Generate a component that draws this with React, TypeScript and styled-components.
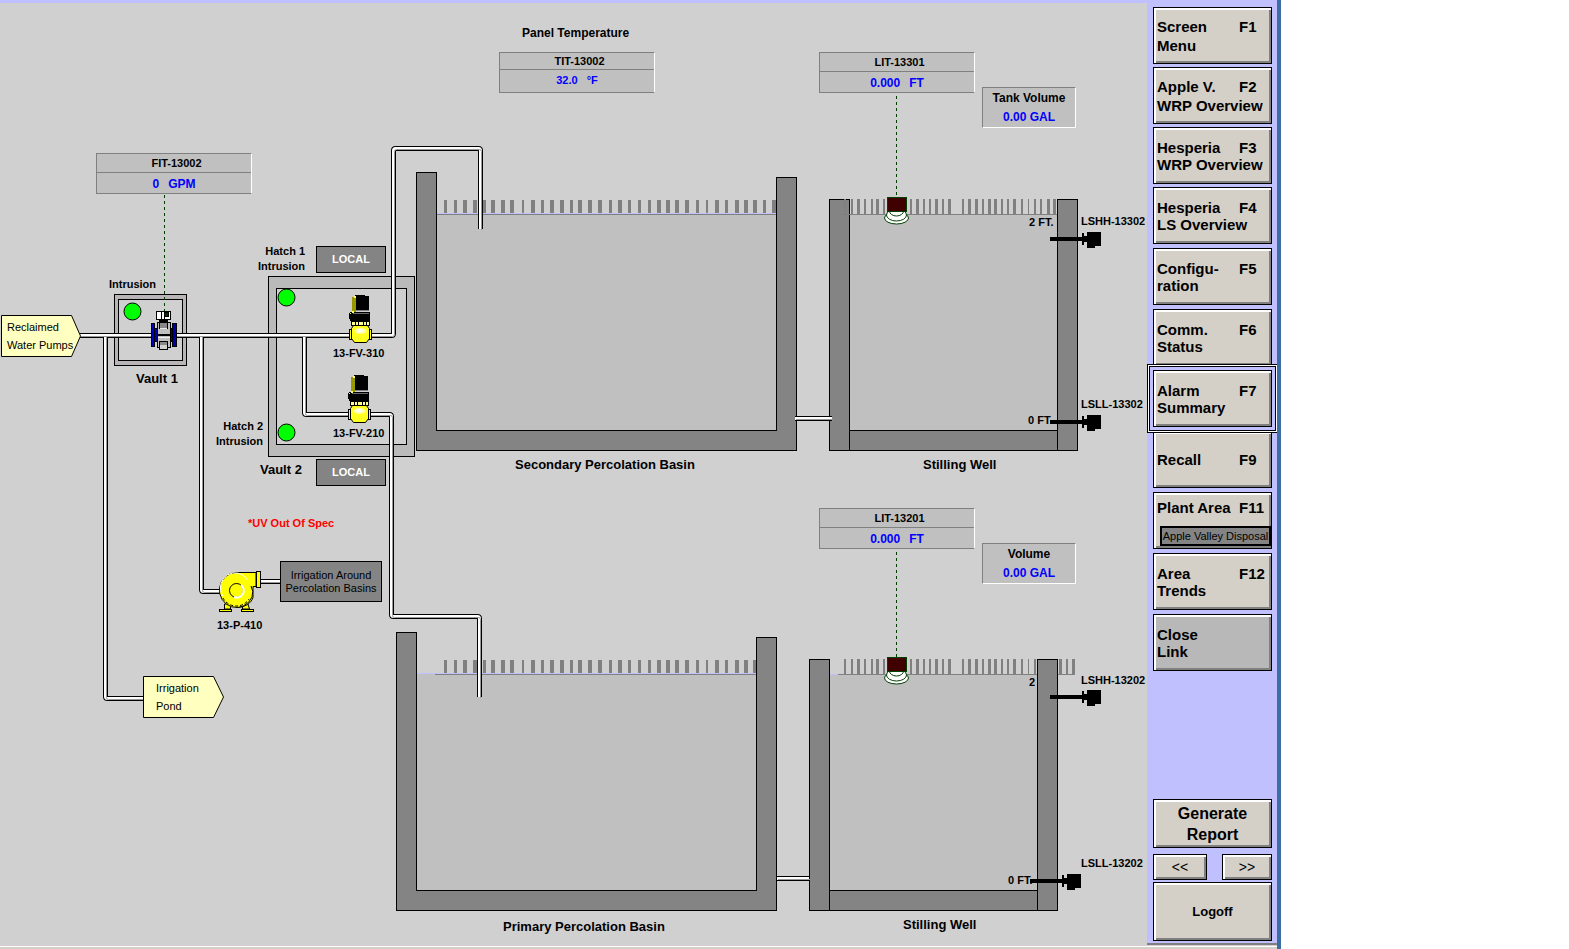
import React from "react";
import styled, { createGlobalStyle, css } from "styled-components";

const color = {
  canvas: "#d0d0d0",
  lilac: "#c0c0ff",
  water: "#c0c0c0",
  steel: "#848484",
  grey: "#808080",
  face: "#d4d0c8",
  value: "#0000ff",
  signal: "#004000",
  tag: "#ffffc0",
};

const GlobalStyle = createGlobalStyle`
  *, *::before, *::after { box-sizing: border-box; }
  body {
    margin: 0;
    background: #fff;
    color: #000;
    font: 11px/15px "Liberation Sans", Arial, sans-serif;
  }
`;

/* ---------- page frame ---------- */

const Workstation = styled.div`
  display: flex;
  flex-direction: column;
  max-width: 1281px;
  min-height: 100vh;
  border-right: 4px solid #3a6ea5;
  background: ${color.canvas};
`;

const Workspace = styled.div`
  display: flex;
  flex: 1;
`;

const StatusEdge = styled.footer`
  height: 3px;
  border-top: 1px solid #fff;
  background: ${color.face};
`;

const CanvasArea = styled.main`
  flex: 1;
  min-width: 0;
  overflow: hidden;
  background: ${color.canvas};
  box-shadow: inset 0 3px ${color.lilac};
`;

const Canvas = styled.div`
  position: relative;
  min-height: 946px;
`;

const Artwork = styled.svg`
  position: absolute;
  top: 0;
  left: 0;
  display: block;
`;

/* ---------- canvas nodes ---------- */

interface Spot {
  $x: number;
  $y: number;
}

const spot = css<Spot>`
  position: absolute;
  left: ${(p) => p.$x}px;
  top: ${(p) => p.$y}px;
`;

const Label = styled.div<Spot & { $size?: number; $align?: string; $color?: string }>`
  ${spot}
  font-size: ${(p) => p.$size ?? 11}px;
  font-weight: bold;
  line-height: 15px;
  text-align: ${(p) => p.$align ?? "left"};
  color: ${(p) => p.$color ?? "#000"};
  white-space: pre;
`;

const Meter = styled.section<Spot>`
  ${spot}
  width: 156px;
  height: 41px;
  display: flex;
  flex-direction: column;
  border: 1px solid ${color.grey};
  border-right-color: #fff;
  background: ${color.water};
  font-weight: bold;
`;

const MeterName = styled.div<{ $short?: boolean }>`
  height: ${(p) => (p.$short ? 17 : 19)}px;
  padding-left: 5px;
  border-bottom: 1px solid ${color.grey};
  line-height: ${(p) => (p.$short ? 17 : 19)}px;
  text-align: center;
`;

const MeterValue = styled.div<{ $small?: boolean }>`
  display: flex;
  justify-content: center;
  gap: 9px;
  color: ${color.value};
  font-size: ${(p) => (p.$small ? 11 : 12)}px;
  line-height: ${(p) => (p.$small ? 21 : 23)}px;
`;

const Volume = styled.section<Spot>`
  ${spot}
  width: 94px;
  height: 41px;
  display: flex;
  flex-direction: column;
  justify-content: center;
  border: 1px solid;
  border-color: ${color.grey} #fff #fff ${color.grey};
  background: ${color.water};
  font-size: 12px;
  font-weight: bold;
  line-height: 19px;
  text-align: center;
`;

const VolumeValue = styled.div`
  color: ${color.value};
`;

const ModeBox = styled.div<Spot>`
  ${spot}
  width: 70px;
  height: 27px;
  border: 1px solid #000;
  background: ${color.steel};
  color: #fff;
  font-weight: bold;
  line-height: 25px;
  text-align: center;
`;

const Destination = styled.div<Spot>`
  ${spot}
  width: 102px;
  height: 41px;
  padding-top: 7px;
  border: 1px solid #000;
  background: ${color.steel};
  line-height: 13px;
  text-align: center;
  white-space: pre;
`;

const ArrowText = styled.div<Spot>`
  ${spot}
  line-height: 18px;
  white-space: pre;
`;

/* ---------- navigation ---------- */

const Sidebar = styled.nav`
  flex: none;
  display: flex;
  flex-direction: column;
  gap: 4px;
  width: 130px;
  margin-bottom: 1px;
  padding: 7px 5px 2px 6px;
  border-bottom: 2px solid ${color.grey};
  background: ${color.lilac};
  overflow: clip;
`;

const OverviewGroup = styled.div`
  display: flex;
  flex-direction: column;
  gap: 3px;
`;

const FooterGroup = styled.div`
  display: flex;
  flex-direction: column;
  margin-top: auto;
`;

const Pager = styled.div`
  display: flex;
  justify-content: space-between;
  margin: 6px 0 2px;
`;

const Key = styled.button<{ $dim?: boolean; $focused?: boolean; $bottom?: boolean }>`
  position: relative;
  display: flex;
  flex-direction: column;
  justify-content: ${(p) => (p.$bottom ? "flex-end" : "center")};
  width: 100%;
  height: 57px;
  margin: 0;
  padding: 0 0 ${(p) => (p.$bottom ? 2 : 0)}px 3px;
  border: 1px solid #000;
  border-radius: 0;
  background: ${(p) => (p.$dim ? "#b8b8b8" : color.face)};
  box-shadow: inset 2px 2px #fff, inset -2px -2px ${color.grey};
  color: #000;
  font: bold 15px/17px "Liberation Sans", Arial, sans-serif;
  text-align: left;
  white-space: pre;
  ${(p) =>
    p.$focused &&
    css`
      z-index: 1;
      box-shadow: inset 2px 2px #fff, inset -2px -2px ${color.grey},
        0 0 0 3px ${color.lilac}, 0 0 0 4px #000, 0 0 0 5px #fff, 0 0 0 6px #000;
    `}
`;

const KeyRow = styled.span<{ $loose?: boolean }>`
  display: grid;
  grid-template-columns: 82px 1fr;
  align-items: baseline;
  line-height: ${(p) => (p.$loose ? 19 : 17)}px;
`;

const AreaName = styled.span`
  align-self: stretch;
  margin: 10px 0 0 3px;
  height: 20px;
  border: 2px solid #000;
  background: ${color.steel};
  font: 11px/16px "Liberation Sans", Arial, sans-serif;
  text-align: center;
`;

const ReportKey = styled(Key)`
  display: block;
  height: 49px;
  padding: 0;
  font-size: 16px;
  line-height: 21px;
  text-align: center;
`;

const PageKey = styled(Key)<{ $width: number }>`
  width: ${(p) => p.$width}px;
  height: 26px;
  padding: 0;
  font: 14px/16px "Liberation Sans", Arial, sans-serif;
  text-align: center;
`;

const LogoffKey = styled(Key)`
  height: 59px;
  padding: 0;
  font: bold 13px/16px "Liberation Sans", Arial, sans-serif;
  text-align: center;
`;

interface KeyDef {
  label: string;
  code: string;
  loose?: boolean;
  focused?: boolean;
  area?: string;
}

const overviewKeys: KeyDef[] = [
  { label: "Screen\nMenu", code: "F1", loose: true },
  { label: "Apple V.\nWRP Overview", code: "F2", loose: true },
  { label: "Hesperia\nWRP Overview", code: "F3" },
  { label: "Hesperia\nLS Overview", code: "F4" },
];

const systemKeys: KeyDef[] = [
  { label: "Configu-\nration", code: "F5" },
  { label: "Comm.\nStatus", code: "F6" },
  { label: "Alarm\nSummary", code: "F7", focused: true },
  { label: "Recall", code: "F9" },
  { label: "Plant Area", code: "F11", area: "Apple Valley Disposal" },
  { label: "Area\nTrends", code: "F12" },
];

const FunctionKey = ({ def }: { def: KeyDef }) => (
  <Key type="button" $focused={def.focused} $bottom={Boolean(def.area)}>
    <KeyRow $loose={def.loose}>
      <span>{def.label}</span>
      <span>{def.code}</span>
    </KeyRow>
    {def.area && <AreaName>{def.area}</AreaName>}
  </Key>
);

/* ---------- drawing ---------- */

const pipes = [
  "M80 335.5H391.5Q393.5 335.5 393.5 333.5V150.5Q393.5 148.5 395.5 148.5H478.5Q480.5 148.5 480.5 150.5V229",
  "M105.5 335.5V696.5Q105.5 698.5 107.5 698.5H144",
  "M201.5 335.5V589.5Q201.5 591.5 203.5 591.5H222",
  "M304.5 335.5V412.5Q304.5 414.5 306.5 414.5H389.5Q391.5 414.5 391.5 416.5V614.5Q391.5 616.5 393.5 616.5H477.5Q479.5 616.5 479.5 618.5V697",
  "M260 581.5H281",
  "M795 418.5H832",
  "M777 878.5H809",
];

const Pipes = () => (
  <g fill="none" shapeRendering="auto">
    {pipes.map((d) => (
      <path key={d} d={d} stroke="#000" strokeWidth="5" />
    ))}
    {pipes.map((d) => (
      <path key={d} d={d} stroke="#fff" strokeWidth="3" />
    ))}
    {pipes.map((d) => (
      <path key={d} d={d} stroke="#989898" strokeWidth="1" transform="translate(1 1)" />
    ))}
  </g>
);

type Tick = [number, number];

const basinTicks: Tick[] = [
  [444, 3], [454, 3], [463, 4], [473, 4], [483, 3], [491, 4], [501, 4], [510, 4], [522, 2],
  [531, 4], [541, 3], [550, 4], [560, 4], [570, 3], [578, 4], [588, 4], [598, 4], [609, 3],
  [618, 4], [628, 3], [638, 3], [648, 3], [657, 4], [666, 4], [675, 4], [685, 4], [696, 3],
  [706, 2], [715, 4], [725, 3], [735, 4], [744, 4], [753, 4], [763, 3], [772, 4],
];

const wellTicks: Tick[] = [
  [844, 2], [851, 2], [857, 3], [864, 2], [871, 2], [876, 3], [883, 2], [910, 2], [916, 3],
  [923, 2], [929, 2], [935, 3], [942, 2], [948, 3], [962, 2], [968, 3], [975, 3], [982, 2],
  [988, 3], [994, 3], [1001, 2], [1007, 2], [1013, 3], [1021, 2], [1028, 1], [1034, 2],
  [1040, 2], [1047, 3], [1053, 3], [1059, 3], [1066, 2], [1072, 3],
];

const Ticks = ({ ticks, y, height, max }: { ticks: Tick[]; y: number; height: number; max: number }) => (
  <g fill={color.grey}>
    {ticks
      .filter(([x]) => x < max)
      .map(([x, w]) => (
        <rect key={x} x={x} y={y} width={w} height={height} />
      ))}
  </g>
);

const wall = { fill: color.steel, stroke: "#000", strokeWidth: 1 };

const Basin = ({ x, y, lineX }: { x: number; y: number; lineX: number }) => (
  <g>
    <rect x={x + 20} y={y + 42} width="341" height="217" fill={color.water} />
    <rect x={x + 20} y={y + 41} width="341" height="1" fill={color.lilac} />
    <Ticks ticks={basinTicks} y={y + 28} height={13} max={x + 360} />
    <rect x={lineX} y={y + 42} width={x + 360 - lineX} height="1" fill={color.grey} />
    <path
      {...wall}
      d={`M${x + 0.5} ${y + 0.5}h20v258h340v-253h20v273h-380z`}
    />
  </g>
);

const Well = ({ x, y, lineEnd }: { x: number; y: number; lineEnd: number }) => (
  <g>
    <rect x={x + 20} y={y + 15} width="209" height="217" fill={color.water} />
    <rect x={x + 20} y={y + 15} width="12" height="1" fill={color.lilac} />
    <rect {...wall} x={x + 0.5} y={y + 0.5} width="20" height="251" />
    <Ticks ticks={wellTicks} y={y} height={15} max={lineEnd} />
    <rect x="838" y={y + 15} width={lineEnd - 838} height="1" fill={color.grey} />
    <rect {...wall} x={x + 20.5} y={y + 231.5} width="208" height="20" />
    <rect {...wall} x={x + 228.5} y={y + 0.5} width="20" height="251" />
  </g>
);

const LevelSensor = ({ y }: { y: number }) => (
  <g stroke={color.signal} fill="#fff" shapeRendering="auto">
    <ellipse cx="896.5" cy={y + 21} rx="12" ry="6" />
    <ellipse cx="896.5" cy={y + 18} rx="10" ry="6" />
    <ellipse cx="896.5" cy={y + 14} rx="7" ry="5" />
    <rect x="887.5" y={y + 0.5} width="19" height="14" fill="#400000" />
  </g>
);

const LevelSwitch = ({ x, y }: { x: number; y: number }) => (
  <path
    transform={`translate(${x} ${y})`}
    d="M0 5h32v-4h2v3h3v-4h14v14h-6v2h-8v-6h-3v3h-2v-4h-32z"
  />
);

const Valve = ({ x, y }: { x: number; y: number }) => (
  <g transform={`translate(${x} ${y})`}>
    <rect x="6" y="0" width="10" height="2" />
    <rect x="7" y="1" width="13" height="15" />
    <rect x="3" y="2" width="4" height="15" fill="#989800" />
    <rect x="5" y="1" width="2" height="2" fill="#ffff60" />
    <rect x="7" y="15" width="13" height="1" fill="#808080" />
    <rect x="1" y="17" width="20" height="9" />
    <rect x="0" y="18" width="2" height="6" />
    <rect x="3" y="16" width="2" height="2" fill="#ffff60" />
    <rect x="4" y="18" width="16" height="1" fill="#686868" />
    <rect x="1" y="18" width="1" height="1" fill="#ffff60" />
    <rect x="2" y="26" width="19" height="5" />
    <rect x="3" y="27" width="3" height="3" fill="#ffff90" />
    <rect x="7" y="27" width="2" height="3" fill="#ffff90" />
    <rect x="10" y="27" width="4" height="3" fill="#ffff90" />
    <rect x="15" y="27" width="2" height="3" fill="#ffff90" />
    <rect x="18" y="27" width="2" height="3" fill="#ffff90" />
    <path
      d="M4.500 30.500h14l2 3v10l-3 4h-12l-3 -4v-10z"
      fill="#ffff20"
      stroke="#000"
      shapeRendering="auto"
    />
    <rect x="0.500" y="34.500" width="2" height="10" fill="#ffff20" stroke="#000" />
    <rect x="20.500" y="34.500" width="2" height="10" fill="#ffff20" stroke="#000" />
    <ellipse cx="11.500" cy="36" rx="6" ry="3" fill="#ffffa8" shapeRendering="auto" />
    <ellipse cx="11" cy="35.500" rx="3" ry="1.500" fill="#fff" shapeRendering="auto" />
  </g>
);

const FlowMeter = () => (
  <g stroke="#000">
    <rect x="156.500" y="311.500" width="14" height="8" fill="#fff" />
    <path d="M161.500 312v7M164.500 312v7" />
    <rect x="164.500" y="312.500" width="4" height="4" fill="#003000" />
    <rect x="159" y="320" width="9" height="2" stroke="none" />
    <rect x="157.500" y="322.500" width="13" height="25" fill="#c0c0c0" />
    <rect x="159.500" y="322.500" width="8" height="6" fill="#888" />
    <path d="M160 328.500h7" stroke="#e8e8e8" />
    <path d="M158 334.500h13M158 335.500h13" />
    <path d="M158 337.500h12" stroke="#eee" />
    <rect x="159.500" y="341.500" width="8" height="8" fill="#d0d0d0" />
    <rect x="160" y="342" width="7" height="3" fill="#888" stroke="none" />
    <rect x="154.500" y="328.500" width="3" height="13" fill="#0000b0" />
    <rect x="170.500" y="328.500" width="3" height="13" fill="#0000b0" />
    <rect x="151.500" y="323.500" width="3" height="23" fill="#0000c0" />
    <rect x="172.500" y="323.500" width="4" height="23" fill="#0000a0" />
  </g>
);

const Pump = () => (
  <g fill="#ffff00" stroke="#000" shapeRendering="auto">
    <path d="M224.500 604v5h6v-5zM242.500 604v5h7l-2 -6z" />
    <rect x="219.500" y="609.500" width="12" height="2" />
    <rect x="241.500" y="609.500" width="12" height="2" />
    <path d="M236 572.500h20v14h-3v11c-2 6 -8 10 -17 10z" />
    <path d="M236.500 572.500A17 17.500 0 1 0 252 597q2 -6 -1 -11" />
    <path d="M222.500 596a14.500 15 0 0 1 25 -16" fill="none" stroke="#fff" />
    <path d="M223 598a15 15 0 0 0 26 1" fill="none" strokeDasharray="3 2" />
    <circle cx="236.500" cy="590.500" r="7" />
    <path d="M234 597a7 7 0 0 0 7 -12" fill="none" stroke="#fff" strokeWidth="2" />
    <rect x="256.500" y="571.500" width="4" height="16" />
  </g>
);

const Lamp = ({ cx, cy }: { cx: number; cy: number }) => (
  <circle cx={cx} cy={cy} r="8.500" fill="#00ff00" stroke="#000" shapeRendering="auto" />
);

const Schematic = () => (
  <Artwork width="1147" height="946" viewBox="0 0 1147 946" shapeRendering="crispEdges" aria-hidden="true">
    <g stroke="#000">
      <rect x="114.500" y="294.500" width="72" height="71" fill="#b8b4b8" />
      <rect x="118.500" y="299.500" width="64" height="61" fill={color.canvas} />
      <rect x="268.500" y="276.500" width="146" height="180" fill="#bababa" />
      <rect x="276.500" y="288.500" width="130" height="156" fill={color.canvas} />
    </g>
    <Basin x={416} y={172} lineX={437} />
    <Basin x={396} y={632} lineX={435} />
    <Well x={829} y={199} lineEnd={1057} />
    <Well x={809} y={659} lineEnd={1075} />
    <g fill="none" stroke={color.signal} strokeDasharray="3 3">
      <path d="M164.500 195V312" />
      <path d="M896.500 96V197" />
      <path d="M896.500 552V657" />
    </g>
    <Pipes />
    <Lamp cx={132.5} cy={311.5} />
    <Lamp cx={286.5} cy={297.5} />
    <Lamp cx={286.5} cy={432.5} />
    <FlowMeter />
    <Valve x={349} y={295} />
    <Valve x={348} y={375} />
    <Pump />
    <LevelSensor y={197} />
    <LevelSensor y={657} />
    <LevelSwitch x={1050} y={232} />
    <LevelSwitch x={1050} y={415} />
    <LevelSwitch x={1050} y={690} />
    <LevelSwitch x={1030} y={874} />
    <g fill={color.tag} stroke="#000" shapeRendering="auto">
      <path d="M1.500 315.500h70l9 20.500l-9 20.500h-70z" />
      <path d="M143.500 676.500h70l10 20.500l-10 20.500h-70z" />
    </g>
  </Artwork>
);

interface ReadoutProps {
  x: number;
  y: number;
  name: string;
  value: string;
  unit: string;
  compact?: boolean;
}

const Readout = ({ x, y, name, value, unit, compact }: ReadoutProps) => (
  <Meter $x={x} $y={y}>
    <MeterName $short={compact}>{name}</MeterName>
    <MeterValue $small={compact}>
      <span>{value}</span>
      <span>{unit}</span>
    </MeterValue>
  </Meter>
);

export default function App() {
  return (
    <>
      <GlobalStyle />
      <Workstation>
        <Workspace>
          <CanvasArea>
            <Canvas>
              <Schematic />

              <Label $x={522} $y={26} $size={12}>Panel Temperature</Label>
              <Readout x={499} y={52} name="TIT-13002" value="32.0" unit="°F" compact />
              <Readout x={96} y={153} name="FIT-13002" value="0" unit="GPM" />
              <Readout x={819} y={52} name="LIT-13301" value="0.000" unit="FT" />
              <Readout x={819} y={508} name="LIT-13201" value="0.000" unit="FT" />
              <Volume $x={982} $y={87}>
                <div>Tank Volume</div>
                <VolumeValue>0.00 GAL</VolumeValue>
              </Volume>
              <Volume $x={982} $y={543}>
                <div>Volume</div>
                <VolumeValue>0.00 GAL</VolumeValue>
              </Volume>

              <ArrowText $x={7} $y={318}>{"Reclaimed\nWater Pumps"}</ArrowText>
              <ArrowText $x={156} $y={679}>{"Irrigation\nPond"}</ArrowText>

              <Label $x={109} $y={277}>Intrusion</Label>
              <Label $x={136} $y={371} $size={13}>Vault 1</Label>
              <Label $x={258} $y={244} $align="right">{"Hatch 1\nIntrusion"}</Label>
              <Label $x={216} $y={419} $align="right">{"Hatch 2\nIntrusion"}</Label>
              <Label $x={260} $y={462} $size={13}>Vault 2</Label>
              <Label $x={333} $y={346}>13-FV-310</Label>
              <Label $x={333} $y={426}>13-FV-210</Label>
              <ModeBox $x={316} $y={246}>LOCAL</ModeBox>
              <ModeBox $x={316} $y={459}>LOCAL</ModeBox>

              <Label $x={248} $y={516} $color="#ff0000">*UV Out Of Spec</Label>
              <Destination $x={280} $y={561}>{"Irrigation Around\nPercolation Basins"}</Destination>
              <Label $x={217} $y={618}>13-P-410</Label>

              <Label $x={515} $y={457} $size={13}>Secondary Percolation Basin</Label>
              <Label $x={923} $y={457} $size={13}>Stilling Well</Label>
              <Label $x={503} $y={919} $size={13}>Primary Percolation Basin</Label>
              <Label $x={903} $y={917} $size={13}>Stilling Well</Label>

              <Label $x={1029} $y={215}>2 FT.</Label>
              <Label $x={1028} $y={413}>0 FT</Label>
              <Label $x={1029} $y={675}>2</Label>
              <Label $x={1008} $y={873}>0 FT.</Label>
              <Label $x={1081} $y={214}>LSHH-13302</Label>
              <Label $x={1081} $y={397}>LSLL-13302</Label>
              <Label $x={1081} $y={673}>LSHH-13202</Label>
              <Label $x={1081} $y={856}>LSLL-13202</Label>
            </Canvas>
          </CanvasArea>

          <Sidebar aria-label="Screens">
            <OverviewGroup>
              {overviewKeys.map((def) => (
                <FunctionKey key={def.code} def={def} />
              ))}
            </OverviewGroup>
            {systemKeys.map((def) => (
              <FunctionKey key={def.code} def={def} />
            ))}
            <Key type="button" $dim>{"Close\nLink"}</Key>
            <FooterGroup>
              <ReportKey type="button">{"Generate\nReport"}</ReportKey>
              <Pager>
                <PageKey type="button" $width={54}>{"<<"}</PageKey>
                <PageKey type="button" $width={50}>{">>"}</PageKey>
              </Pager>
              <LogoffKey type="button">Logoff</LogoffKey>
            </FooterGroup>
          </Sidebar>
        </Workspace>
        <StatusEdge />
      </Workstation>
    </>
  );
}
